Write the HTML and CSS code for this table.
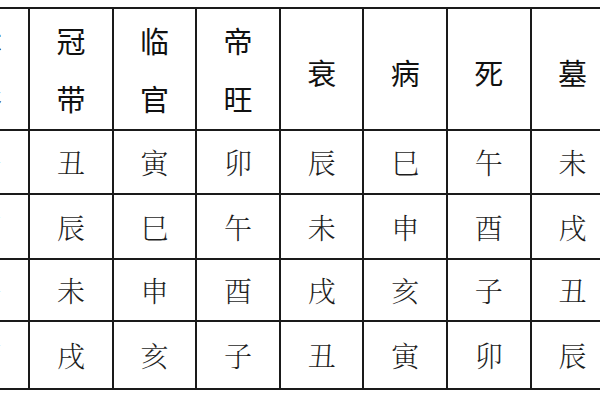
FILE: index.html
```html
<!DOCTYPE html>
<html lang="zh-CN">
<head>
<meta charset="utf-8">
<link rel="stylesheet" href="styles.css">
</head>
<body>
<table class="stages">
  <thead>
    <tr class="head-row">
      <th class="two">沐<br>浴</th>
      <th class="two">冠<br>带</th>
      <th class="two">临<br>官</th>
      <th class="two">帝<br>旺</th>
      <th>衰</th>
      <th>病</th>
      <th>死</th>
      <th>墓</th>
    </tr>
  </thead>
  <tbody>
    <tr class="r1"><td>子</td><td>丑</td><td>寅</td><td>卯</td><td>辰</td><td>巳</td><td>午</td><td>未</td></tr>
    <tr class="r2"><td>卯</td><td>辰</td><td>巳</td><td>午</td><td>未</td><td>申</td><td>酉</td><td>戌</td></tr>
    <tr class="r3"><td>午</td><td>未</td><td>申</td><td>酉</td><td>戌</td><td>亥</td><td>子</td><td>丑</td></tr>
    <tr class="r4"><td>酉</td><td>戌</td><td>亥</td><td>子</td><td>丑</td><td>寅</td><td>卯</td><td>辰</td></tr>
  </tbody>
</table>
</body>
</html>
```

FILE: styles.css
```css
html, body {
  margin: 0;
  padding: 0;
  background: #ffffff;
  overflow: hidden;
  width: 600px;
  height: 400px;
}

.stages {
  border-collapse: collapse;
  table-layout: fixed;
  width: 669px;
  margin-top: 7px;
  margin-left: -55.5px;
}

.stages th,
.stages td {
  width: 81.6px;
  border: 2px solid #1a1a1a;
  padding: 0;
  text-align: center;
  vertical-align: middle;
}

.stages th {
  font-family: "Noto Sans CJK SC", "Noto Sans", sans-serif;
  font-weight: 400;
  font-size: 29px;
  line-height: 58px;
  color: #111111;
}

.stages th:not(.two) {
  padding-top: 6px;
}

.head-row { height: 122px; }

.stages td {
  font-family: "Noto Serif CJK SC", "Noto Sans CJK SC", serif;
  font-weight: 300;
  font-size: 28px;
  line-height: 1;
  color: #1e1e1e;
}

.r1 { height: 64px; }
.r2 { height: 65px; }
.r3 { height: 62px; }
.r4 { height: 68px; }
```
